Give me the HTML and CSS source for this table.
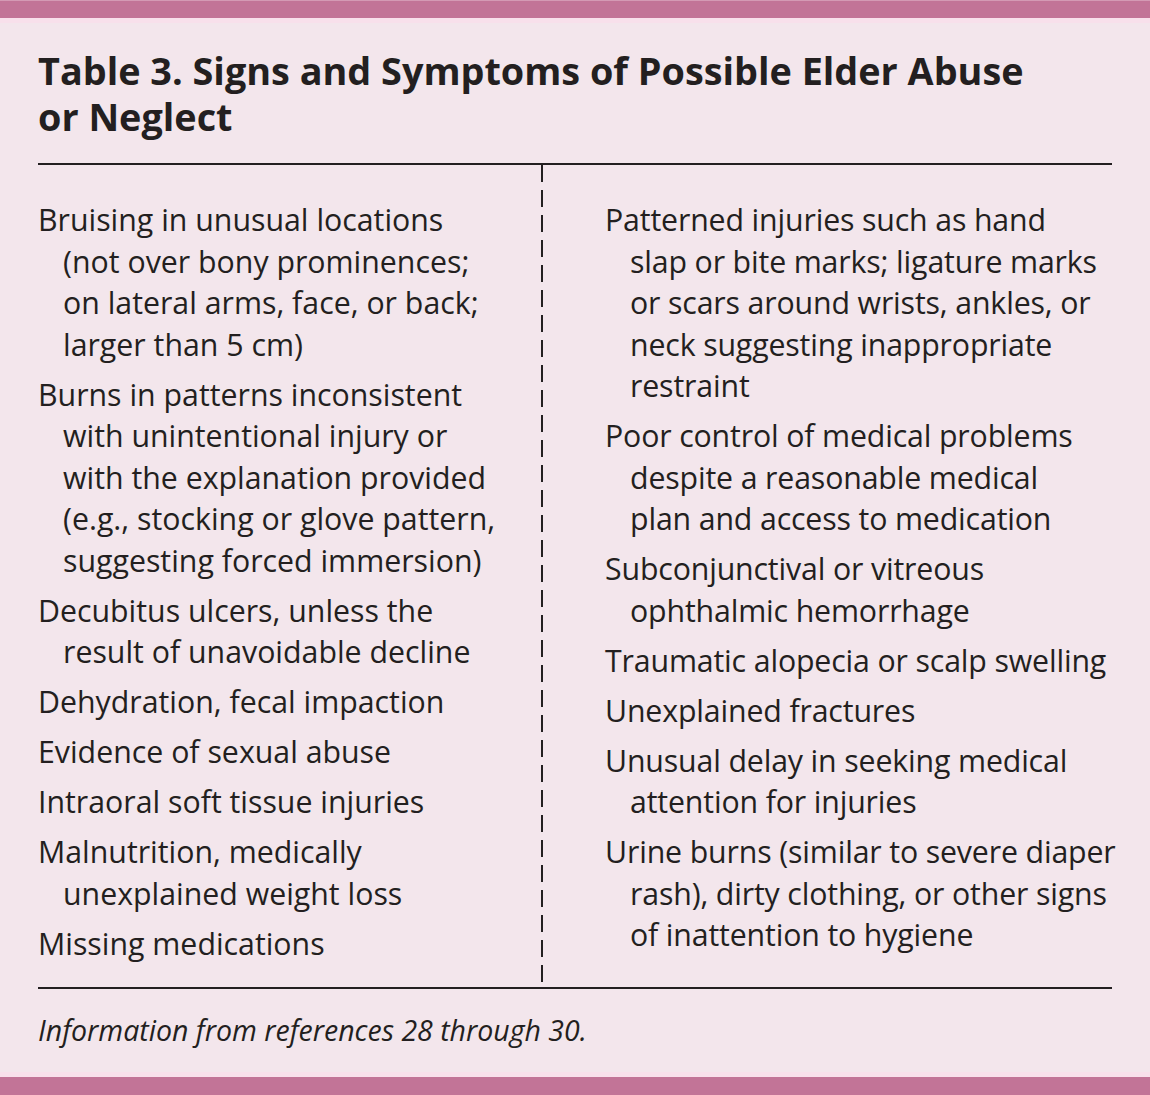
FILE: index.html
```html
<!DOCTYPE html>
<html lang="en">
<head>
<meta charset="utf-8">
<title>Table 3. Signs and Symptoms of Possible Elder Abuse or Neglect</title>
<link rel="stylesheet" href="styles.css">
</head>
<body>
<div class="bar bar-top"></div>
<div class="strip"></div>
<main class="page">
  <h1 class="title">Table 3. Signs and Symptoms of Possible Elder Abuse<br>or Neglect</h1>
  <div class="table">
    <ul class="col col-left">
      <li>Bruising in unusual locations<br>(not over bony prominences;<br>on lateral arms, face, or back;<br>larger than 5 cm)</li>
      <li>Burns in patterns inconsistent<br>with unintentional injury or<br>with the explanation provided<br>(e.g., stocking or glove pattern,<br>suggesting forced immersion)</li>
      <li>Decubitus ulcers, unless the<br>result of unavoidable decline</li>
      <li>Dehydration, fecal impaction</li>
      <li>Evidence of sexual abuse</li>
      <li>Intraoral soft tissue injuries</li>
      <li>Malnutrition, medically<br>unexplained weight loss</li>
      <li>Missing medications</li>
    </ul>
    <div class="divider"></div>
    <ul class="col col-right">
      <li>Patterned injuries such as hand<br>slap or bite marks; ligature marks<br>or scars around wrists, ankles, or<br>neck suggesting inappropriate<br>restraint</li>
      <li>Poor control of medical problems<br>despite a reasonable medical<br>plan and access to medication</li>
      <li>Subconjunctival or vitreous<br>ophthalmic hemorrhage</li>
      <li>Traumatic alopecia or scalp swelling</li>
      <li>Unexplained fractures</li>
      <li>Unusual delay in seeking medical<br>attention for injuries</li>
      <li>Urine burns (similar to severe diaper<br>rash), dirty clothing, or other signs<br>of inattention to hygiene</li>
    </ul>
  </div>
  <p class="note">Information from references 28 through 30.</p>
</main>
<div class="strip"></div>
<div class="bar bar-bottom"></div>
</body>
</html>
```

FILE: styles.css
```css
html, body {
  margin: 0;
  padding: 0;
}
body {
  background: #f3e6ec;
  color: #231f20;
  font-family: "Open Sans", "Noto Sans", sans-serif;
  width: 1150px;
  height: 1095px;
  overflow: hidden;
  display: flex;
  flex-direction: column;
}
.bar {
  background: #c27497;
}
.bar-top {
  height: 17px;
  border-top: 1px solid #d49ab4;
}
.bar-bottom {
  height: 18px;
}
.strip {
  height: 5px;
  background: #f8e0eb;
}
.page {
  flex: 1;
  padding: 0 38px;
  display: flex;
  flex-direction: column;
}
.title {
  margin: 25px 0 0;
  font-size: 37.8px;
  line-height: 46px;
  font-weight: 700;
  color: #231f20;
  white-space: nowrap;
}
.table {
  margin-top: 23px;
  border-top: 2px solid #231f20;
  border-bottom: 2px solid #231f20;
  display: grid;
  grid-template-columns: 503px 2px 1fr;
}
.col {
  list-style: none;
  margin: 0;
  padding: 34px 0 23px;
  font-size: 30.3px;
  line-height: 41.5px;
  white-space: nowrap;
}
.col li {
  padding-left: 25px;
  text-indent: -25px;
  margin-bottom: 8.5px;
}
.col li:last-child {
  margin-bottom: 0;
}
.col-right {
  padding-left: 62px;
  letter-spacing: -0.15px;
}
.divider {
  background: repeating-linear-gradient(to bottom, #231f20 0 17px, transparent 17px 25px);
}
.note {
  margin: 24px 0 0;
  font-size: 28.5px;
  font-style: italic;
  line-height: 34px;
}
```
